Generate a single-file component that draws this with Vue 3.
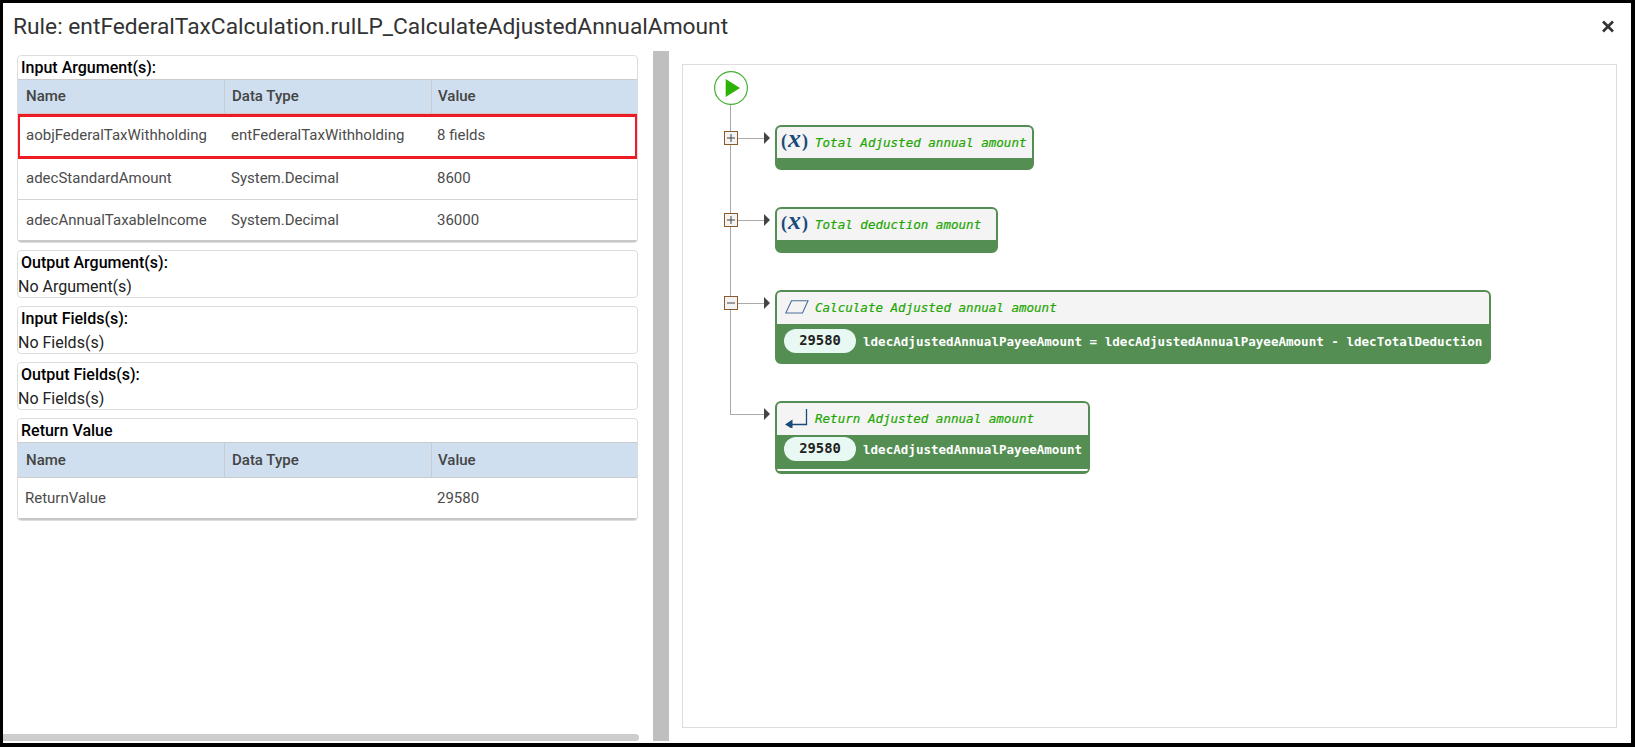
<script setup>
const inputs = [
  { name: 'aobjFederalTaxWithholding', type: 'entFederalTaxWithholding', value: '8 fields', marked: true },
  { name: 'adecStandardAmount', type: 'System.Decimal', value: '8600' },
  { name: 'adecAnnualTaxableIncome', type: 'System.Decimal', value: '36000' }
]
const emptySections = [
  { title: 'Output Argument(s):', text: 'No Argument(s)' },
  { title: 'Input Fields(s):', text: 'No Fields(s)' },
  { title: 'Output Fields(s):', text: 'No Fields(s)' }
]
</script>

<template>
  <div class="modal">
    <header class="head">
      <h1 class="title">Rule: entFederalTaxCalculation.rulLP_CalculateAdjustedAnnualAmount</h1>
      <svg class="close" width="12" height="13" viewBox="0 0 12 13"><path d="M1 1.5 11 11.5M11 1.5 1 11.5" stroke="#333" stroke-width="2.6" fill="none"/></svg>
    </header>
    <div class="body">
      <section class="left">
        <div class="cards">
          <div class="card first">
            <div class="card-title">Input Argument(s):</div>
            <div class="table">
              <div class="tr th"><span>Name</span><span>Data Type</span><span>Value</span></div>
              <div v-for="r in inputs" :key="r.name" class="tr td" :class="{ marked: r.marked }">
                <span>{{ r.name }}</span><span>{{ r.type }}</span><span>{{ r.value }}</span>
              </div>
            </div>
          </div>
          <div v-for="s in emptySections" :key="s.title" class="card">
            <div class="card-title">{{ s.title }}</div>
            <div class="empty">{{ s.text }}</div>
          </div>
          <div class="card">
            <div class="card-title">Return Value</div>
            <div class="table">
              <div class="tr th tall"><span>Name</span><span>Data Type</span><span>Value</span></div>
              <div class="tr td single"><span>ReturnValue</span><span></span><span>29580</span></div>
            </div>
          </div>
        </div>
        <div class="hscroll"></div>
      </section>
      <div class="splitter"></div>
      <section class="right">
        <div class="canvas">
          <div class="flow">
            <svg class="play" width="34" height="34" viewBox="0 0 34 34">
              <circle cx="17" cy="17" r="16.4" fill="#fff" stroke="#43b02f" stroke-width="1.2"/>
              <path d="M11.7 8 26 17 11.7 26Z" fill="#2cb306"/>
            </svg>

            <div class="row">
              <div class="gutter">
                <svg class="tog" width="14" height="14" viewBox="0 0 14 14"><rect x=".5" y=".5" width="13" height="13" fill="#f3f3f3" stroke="#8a5a2c"/><path d="M3 7H11M7 3V11" stroke="#444"/></svg>
                <i class="link"></i><i class="arrow"></i>
              </div>
              <div class="node n1">
                <div class="nhead"><span class="fx"><b>(</b><em>x</em><b>)</b></span><span class="ntitle">Total Adjusted annual amount</span></div>
                <div class="nfoot"></div>
              </div>
            </div>

            <div class="row">
              <div class="gutter">
                <svg class="tog" width="14" height="14" viewBox="0 0 14 14"><rect x=".5" y=".5" width="13" height="13" fill="#f3f3f3" stroke="#8a5a2c"/><path d="M3 7H11M7 3V11" stroke="#444"/></svg>
                <i class="link"></i><i class="arrow"></i>
              </div>
              <div class="node n2">
                <div class="nhead"><span class="fx"><b>(</b><em>x</em><b>)</b></span><span class="ntitle">Total deduction amount</span></div>
                <div class="nfoot"></div>
              </div>
            </div>

            <div class="row">
              <div class="gutter">
                <svg class="tog" width="14" height="14" viewBox="0 0 14 14"><rect x=".5" y=".5" width="13" height="13" fill="#f3f3f3" stroke="#8a5a2c"/><path d="M3 7H11" stroke="#444"/></svg>
                <i class="link"></i><i class="arrow"></i>
              </div>
              <div class="node n3">
                <div class="nhead">
                  <svg class="ico" width="24" height="14" viewBox="0 0 24 14"><path d="M6.5 .8H23L17.5 13H.8Z" fill="#f4f4f4" stroke="#4a6f98" stroke-width="1.1"/></svg>
                  <span class="ntitle">Calculate Adjusted annual amount</span>
                </div>
                <div class="nbody"><span class="pill">29580</span><span class="expr">ldecAdjustedAnnualPayeeAmount = ldecAdjustedAnnualPayeeAmount - ldecTotalDeduction</span></div>
              </div>
            </div>

            <div class="row">
              <div class="gutter">
                <i class="nobox"></i>
                <i class="link"></i><i class="arrow"></i>
              </div>
              <div class="node n4">
                <div class="nhead">
                  <svg class="ico" width="24" height="20" viewBox="0 0 24 20"><path d="M21.5 1V16.5H6" fill="none" stroke="#1a4a7a" stroke-width="1.3"/><path d="M0 16.5 7.5 11.5V21Z" fill="#1a4a7a"/></svg>
                  <span class="ntitle">Return Adjusted annual amount</span>
                </div>
                <div class="nbody"><span class="pill">29580</span><span class="expr">ldecAdjustedAnnualPayeeAmount</span></div>
                <div class="nstrip"></div>
              </div>
            </div>
          </div>
        </div>
      </section>
    </div>
  </div>
</template>

<style>
html, body { margin: 0; background: #fff; }
</style>

<style scoped>
.modal {
  width: 1635px;
  height: 747px;
  box-sizing: border-box;
  border: 3px solid #000;
  border-bottom-width: 4px;
  border-right-width: 4px;
  background: #fff;
  display: flex;
  flex-direction: column;
  font-family: Roboto, sans-serif;
  overflow: hidden;
}
.head {
  height: 48px;
  flex: none;
  display: flex;
  align-items: center;
  justify-content: space-between;
  padding: 0 17px 0 10px;
  box-sizing: border-box;
}
.title {
  margin: 0 0 2px;
  font-size: 22.75px;
  font-weight: 400;
  color: #333;
  white-space: nowrap;
}
.close { margin-bottom: 1px; }
.body { flex: 1; display: flex; min-height: 0; padding-bottom: 2px; }
.left {
  width: 650px;
  flex: none;
  display: flex;
  flex-direction: column;
  justify-content: space-between;
}
.cards {
  padding: 4px 15px 0 14px;
  display: flex;
  flex-direction: column;
  gap: 8px;
}
.hscroll {
  height: 7px;
  width: 636px;
  background: #cdcdcd;
  border-radius: 0 4px 4px 0;
}
.splitter { width: 16px; flex: none; background: #bfbfbf; }
.right { flex: 1; padding: 13px 14px 13px 13px; display: flex; min-width: 0; }
.card {
  border: 1px solid #ddd;
  border-radius: 4px;
  overflow: hidden;
}
.first { margin-bottom: -1px; }
.card-title {
  height: 23px;
  line-height: 24px;
  padding-left: 3px;
  font-size: 16px;
  font-weight: 500;
  color: #000;
}
.empty {
  height: 23px;
  line-height: 22px;
  padding-top: 2px;
  box-sizing: border-box;
  font-size: 16px;
  color: #222;
}
.tr {
  display: grid;
  grid-template-columns: 206px 207px 1fr;
  font-size: 15px;
}
.tr span { padding-left: 8px; display: flex; align-items: center; box-sizing: border-box; }
.th {
  height: 35px;
  background: #cfdfef;
  color: #444;
  font-weight: 500;
  border-top: 1px solid #ccc;
  border-bottom: 1px solid #ccc;
  box-sizing: border-box;
}
.th span { padding-bottom: 1px; }
.th span + span { border-left: 1px solid #c8ccd0; padding-left: 7px; }
.th span:last-child { padding-left: 6px; }
.tall { height: 36px; }
.td {
  height: 41px;
  color: #4c4c4c;
  box-sizing: border-box;
  border-bottom: 1px solid #d4d4d4;
  padding-bottom: 2px;
}
.td:last-child { height: 42px; border-bottom: 2px solid #c8c8c8; padding-bottom: 1px; }
.td span + span { padding-left: 7px; }
.td span:last-child { padding-left: 6px; }
.td.single { height: 42px; padding-bottom: 0; }
.td.single span:first-child { padding-left: 7px; }
.marked {
  height: 45px;
  border: 3px solid #ed1c24;
  margin: 0 -1px;
  position: relative;
  grid-template-columns: 204px 207px 1fr;
  padding-bottom: 3px;
}
.marked span:first-child { padding-left: 6px; }
.canvas {
  flex: 1;
  border: 1px solid #ddd;
  box-sizing: border-box;
}
.flow {
  position: relative;
  padding: 6px 0 0 31px;
  display: flex;
  flex-direction: column;
  align-items: flex-start;
}
.flow::before {
  content: "";
  position: absolute;
  left: 47px;
  top: 40px;
  height: 310px;
  width: 1px;
  background: #aaa;
}
.play { display: block; position: relative; margin-bottom: 20px; }
.row { display: flex; margin: 0 0 37px 10px; align-items: flex-start; position: relative; }
.gutter { width: 51px; height: 26px; display: flex; align-items: center; }
.tog, .nobox { flex: none; }
.tog { display: block; }
.nobox { width: 7px; }
.link { flex: 1; height: 1px; background: #aaa; }
.arrow {
  width: 0;
  height: 0;
  border-left: 6px solid #444;
  border-top: 6px solid transparent;
  border-bottom: 6px solid transparent;
  margin-right: 5px;
}
.node {
  border: 2px solid #548e52;
  border-radius: 6px;
  background: #548e52;
  box-sizing: border-box;
  overflow: hidden;
}
.n1 { width: 259px; height: 45px; }
.n2 { width: 223px; height: 46px; }
.n3 { width: 716px; height: 74px; }
.n4 { width: 315px; height: 73px; }
.nhead {
  height: 31px;
  background: #f4f4f4;
  display: flex;
  align-items: center;
  padding-left: 4px;
}
.n3 .nhead, .n4 .nhead { height: 32px; padding: 0 0 2px 8px; box-sizing: border-box; }
.ico { flex: none; margin-right: 6px; display: block; }
.fx {
  width: 34px;
  flex: none;
  color: #1a4a7a;
  font-family: "Liberation Serif", serif;
  font-size: 18px;
  line-height: 20px;
  margin-bottom: 6px;
  white-space: nowrap;
}
.fx b { font-weight: 700; }
.fx em { font-weight: 700; font-style: italic; font-size: 26px; padding: 0 1px; line-height: 20px; }
.ntitle {
  font-family: "DejaVu Sans Mono", monospace;
  font-style: italic;
  font-size: 12.56px;
  color: #1da602;
  -webkit-text-stroke: .2px #1da602;
  white-space: pre;
}
.nbody {
  display: flex;
  align-items: center;
  height: 34px;
  padding-left: 7px;
}
.n4 .nbody { height: 34px; align-items: flex-start; padding-top: 2px; box-sizing: border-box; }
.pill {
  width: 72px;
  height: 24px;
  border-radius: 12px;
  background: #e8f8f2;
  color: #222;
  display: flex;
  align-items: center;
  justify-content: center;
  font-family: "DejaVu Sans Mono", monospace;
  font-weight: 700;
  font-size: 13.8px;
  padding-bottom: 2px;
  box-sizing: border-box;
  flex: none;
  margin-right: 7px;
}
.expr {
  font-family: "DejaVu Sans Mono", monospace;
  font-weight: 700;
  font-size: 12.56px;
  line-height: 24px;
  padding-top: 2px;
  color: #fff;
  white-space: pre;
}
.n4 .expr { padding-top: 1px; }
.nstrip { height: 2px; background: #fff; }
</style>
